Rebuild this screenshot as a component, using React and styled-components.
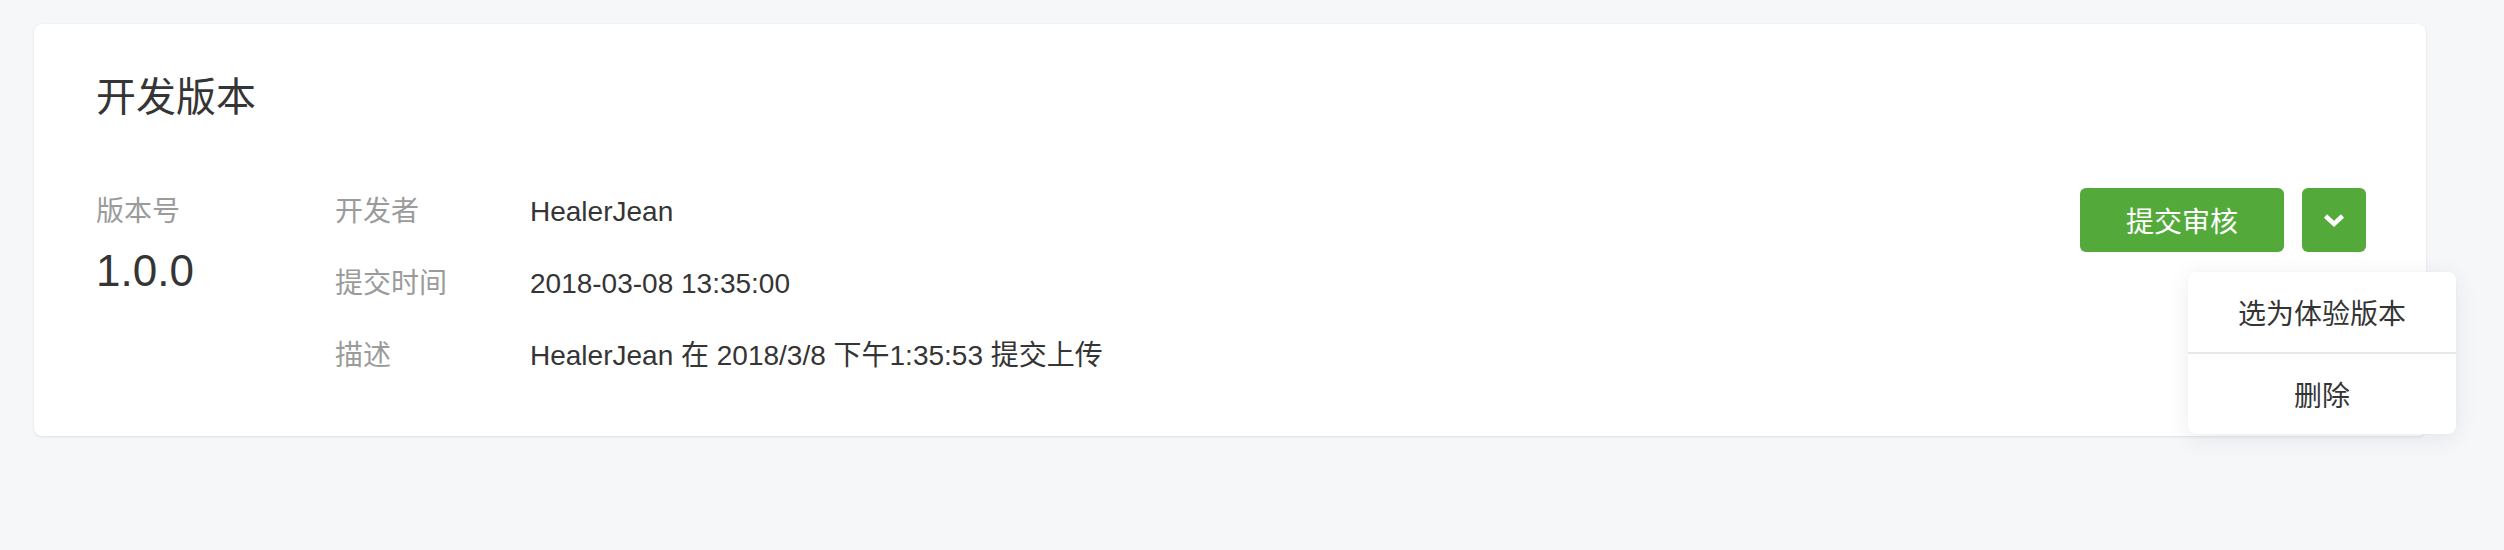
import React from 'react';
import styled, { createGlobalStyle } from 'styled-components';

const GlobalStyle = createGlobalStyle`
  html, body {
    margin: 0;
    padding: 0;
    background: #f6f7f9;
  }
  body {
    font-family: "Liberation Sans", "Noto Sans CJK SC", sans-serif;
    color: #353535;
  }
`;

const Page = styled.div`
  min-height: 100vh;
  box-sizing: border-box;
  padding: 24px 78px 0 34px;
  background: #f6f7f9;
`;

const Card = styled.section`
  position: relative;
  background: #fff;
  border-radius: 8px;
  box-shadow: 0 1px 3px rgba(0, 0, 0, 0.09), 0 0 1px rgba(0, 0, 0, 0.06);
  padding: 53px 60px 60px 62px;
`;

const Title = styled.h2`
  margin: 0 0 75px;
  font-size: 40px;
  line-height: 40px;
  font-weight: 400;
  color: #353535;
`;

const Body = styled.div`
  display: flex;
  align-items: flex-start;
`;

const VersionCol = styled.div`
  width: 239px;
  flex-shrink: 0;
`;

const Label = styled.div`
  font-size: 28px;
  line-height: 40px;
  color: #9b9b9b;
`;

const VersionNo = styled.div`
  margin-top: 11px;
  font-size: 44px;
  line-height: 56px;
  color: #353535;
`;

const InfoList = styled.div`
  flex: 1;
  display: grid;
  row-gap: 32px;
`;

const InfoRow = styled.div`
  display: grid;
  grid-template-columns: 195px 1fr;
  font-size: 28px;
  line-height: 40px;
`;

const Value = styled.div`
  color: #353535;
`;

const Actions = styled.div`
  display: flex;
  gap: 18px;
  margin-top: -4px;
`;

const GreenButton = styled.button`
  height: 64px;
  width: ${p => (p.$square ? '64px' : '204px')};
  padding: 0;
  border: none;
  border-radius: 6px;
  background: #53aa3a;
  color: #fff;
  font-family: inherit;
  font-size: 28px;
  display: flex;
  align-items: center;
  justify-content: center;
  cursor: pointer;
`;

const DropWrap = styled.div`
  position: relative;
`;

const Menu = styled.ul`
  position: absolute;
  top: calc(100% + 20px);
  right: -90px;
  width: 268px;
  margin: 0;
  padding: 0;
  list-style: none;
  background: #fff;
  border-radius: 8px;
  box-shadow: 0 4px 24px rgba(20, 30, 60, 0.08), 0 0 2px rgba(0, 0, 0, 0.04);
  z-index: 2;
`;

const MenuItem = styled.li`
  height: 80px;
  display: flex;
  align-items: center;
  justify-content: center;
  font-size: 28px;
  color: #353535;
  & + & {
    border-top: 2px solid #e6e6eb;
  }
`;

const Chevron = () => (
  <svg width="22" height="15" viewBox="0 0 22 15" fill="none">
    <polyline
      points="2.5,3 11,11 19.5,3"
      stroke="#fff"
      strokeWidth="4.5"
      strokeLinecap="butt"
      strokeLinejoin="miter"
    />
  </svg>
);

const rows = [
  { label: '开发者', value: 'HealerJean' },
  { label: '提交时间', value: '2018-03-08 13:35:00' },
  { label: '描述', value: 'HealerJean 在 2018/3/8 下午1:35:53 提交上传' },
];

const App = () => {
  return (
    <Page>
      <GlobalStyle />
      <Card>
        <Title>开发版本</Title>
        <Body>
          <VersionCol>
            <Label>版本号</Label>
            <VersionNo>1.0.0</VersionNo>
          </VersionCol>
          <InfoList>
            {rows.map(r => (
              <InfoRow key={r.label}>
                <Label>{r.label}</Label>
                <Value>{r.value}</Value>
              </InfoRow>
            ))}
          </InfoList>
          <Actions>
            <GreenButton>提交审核</GreenButton>
            <DropWrap>
              <GreenButton $square>
                <Chevron />
              </GreenButton>
              <Menu>
                <MenuItem>选为体验版本</MenuItem>
                <MenuItem>删除</MenuItem>
              </Menu>
            </DropWrap>
          </Actions>
        </Body>
      </Card>
    </Page>
  );
};

export default App;
